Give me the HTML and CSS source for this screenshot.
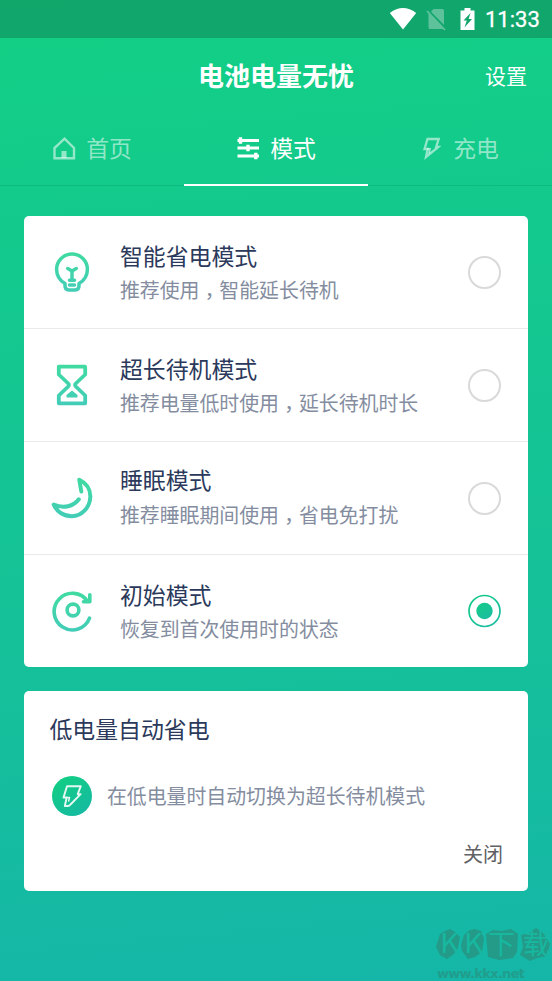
FILE: index.html
```html
<!DOCTYPE html>
<html lang="zh-CN">
<head>
<meta charset="utf-8">
<title>电池电量无忧</title>
<link rel="stylesheet" href="styles.css">
</head>
<body>
<div class="screen">
  <div class="status">
    <svg class="wifi" width="28" height="24" viewBox="0 0 28 24"><path d="M.8 6Q14-3.800 27.200 6L14 22.500Z" fill="#fff"/></svg>
    <svg class="sim" width="20" height="24" viewBox="0 0 20 24"><g fill="#fff" opacity=".32"><path d="M7.500 2H16.500Q18 2 18 3.500V18L5 4.700ZM2.500 6.500L17 22H4Q2.500 22 2.500 20.500Z"/></g><path d="M1 4L19 23" stroke="#fff" stroke-opacity=".32" stroke-width="1.800"/></svg>
    <svg class="battery" width="15" height="22" viewBox="0 0 15 22"><path d="M4.500 0H10.500V2.500H14.500V22H.5V2.500H4.500Z" fill="#fff"/><path d="M10.500 5L3.500 12.500H6.800L4.500 19.500L12 11H8.600Z" fill="#10a56b"/></svg>
    <span class="clock">11:33</span>
  </div>
  <header class="header"><h1>电池电量无忧</h1><span class="settings">设置</span></header>
  <nav class="tabs">
    <div class="tab">
      <svg width="24" height="24" viewBox="0 0 24 24" fill="none" stroke="currentColor" stroke-width="2.400"><path d="M2.500 22.200V12L12.500 2.700L22 12V22.200Z"/><path d="M9.500 15H14.500V22H9.500Z" fill="currentColor" stroke="none"/></svg>
      <span>首页</span>
    </div>
    <div class="tab active">
      <svg width="24" height="24" viewBox="0 0 24 24" fill="none" stroke="currentColor"><path d="M1.500 4.500H23M1.500 12H23M1.500 20H23" stroke-width="2.800"/><path d="M4.500 1.200V7.800M12 8.800V15.200M19.800 16.700V23.300" stroke-width="3.400"/></svg>
      <span>模式</span>
    </div>
    <div class="tab">
      <svg class="bolt" width="20" height="24" viewBox="0 0 20 24" fill="none" stroke="currentColor" stroke-width="2.300"><path d="M6.500 3H17.700L15.200 10.800H17.500L5 21L6.600 13H3.500Z"/><path d="M6 13H9L8 17.500" stroke-width="1.800"/></svg>
      <span>充电</span>
    </div>
  </nav>
  <main>
    <section class="card modes">
      <div class="row">
        <svg class="icon" width="42" height="42" viewBox="0 0 42 42" fill="none" stroke="url(#ic)" stroke-width="3.500" stroke-linecap="round" stroke-linejoin="round">
          <defs><linearGradient id="ic" gradientUnits="userSpaceOnUse" x1="0" y1="0" x2="0" y2="42"><stop stop-color="#40dba0"/><stop offset="1" stop-color="#43ccb8"/></linearGradient><linearGradient id="rg" x1="0" y1="0" x2=".7" y2="1"><stop stop-color="#14cc86"/><stop offset="1" stop-color="#1bbda0"/></linearGradient></defs>
          <path d="M14 32.500C8 29 5.600 24 5.600 18.500A15.400 15.400 0 0 1 36.400 18.500C36.400 24 34 29 28 32.500V34.500Q28 39 24 39H18Q14 39 14 34.500Z"/><path d="M16.700 17.500L21 20L25.300 17.500M21 20V29M18.500 29.200H23.500M18.500 34H23.500"/>
        </svg>
        <div class="copy"><h2>智能省电模式</h2><p>推荐使用<span class="comma" lang="zh-TW">，</span>智能延长待机</p></div>
        <span class="radio"></span>
      </div>
      <div class="row">
        <svg class="icon" width="42" height="42" viewBox="0 0 42 42" fill="none" stroke="url(#ic)" stroke-width="3.800" stroke-linejoin="round"><path d="M7.800 2.700H34Q34.200 2.700 34.200 4V10.500L24.800 19.500Q23.500 21 24.800 22.500L34.200 31.500V39.300H7.800V31.500L17.200 22.500Q18.500 21 17.200 19.500L7.800 10.500Z"/><path d="M21 26.500L26.500 31V33.500H15.500V31Z" fill="url(#ic)" stroke="none"/></svg>
        <div class="copy"><h2>超长待机模式</h2><p>推荐电量低时使用<span class="comma" lang="zh-TW">，</span>延长待机时长</p></div>
        <span class="radio"></span>
      </div>
      <div class="row">
        <svg class="icon" width="42" height="42" viewBox="0 0 42 42" fill="none" stroke="url(#ic)" stroke-width="4" stroke-linecap="round" stroke-linejoin="round"><path d="M30.300 14.500L28.300 2.800C36 6.500 39.500 13 39.300 20C38.700 31 30.500 39.200 21 39.200C12.500 39.200 5.500 34.500 2.700 27.500C12.500 32 22.500 29.500 27.800 22.300"/></svg>
        <div class="copy"><h2>睡眠模式</h2><p>推荐睡眠期间使用<span class="comma" lang="zh-TW">，</span>省电免打扰</p></div>
        <span class="radio"></span>
      </div>
      <div class="row">
        <svg class="icon" width="42" height="42" viewBox="0 0 42 42" fill="none" stroke="url(#ic)" stroke-width="3.600" stroke-linecap="round" stroke-linejoin="round"><path d="M38.500 28.200A18.300 18.300 0 1 1 36.500 11.200"/><path d="M38.800 4.700V11.700H32.500"/><circle cx="22" cy="20" r="5.900"/></svg>
        <div class="copy"><h2>初始模式</h2><p>恢复到首次使用时的状态</p></div>
        <svg class="radio-on" width="34" height="34" viewBox="0 0 34 34"><circle cx="17.500" cy="17" r="15.500" fill="none" stroke="url(#rg)" stroke-width="1.700"/><circle cx="17.500" cy="17" r="8.200" fill="url(#rg)"/></svg>
      </div>
    </section>
    <section class="card auto">
      <h2>低电量自动省电</h2>
      <div class="auto-row">
        <span class="badge"><svg width="20" height="24" viewBox="0 0 20 24" fill="none" stroke="#e4f9f2" stroke-width="1.900" stroke-linejoin="round" stroke-linecap="round"><path d="M5 2.200H18.800L15.700 10.200H18.600L8.500 20.500Q7.300 22 6 22H2.800L4.700 13.500H1.500Z"/><path d="M4.700 13.500H7.500L6.600 17" stroke-width="1.500"/></svg></span>
        <p>在低电量时自动切换为超长待机模式</p>
      </div>
      <span class="close">关闭</span>
    </section>
  </main>
  <div class="watermark">
    <svg width="118" height="62" viewBox="0 -8 118 62">
      <g fill="#239b88"><path d="M5 7L10 4L15 2L20 5L25 10L23 21L19 27L12 32L5 28L1 20Z"/><path d="M29 8L35 3L40 2L46 4L49 12L47 25L40 30L33 32L27 24L26 18Z"/><path d="M51 7L58 3L67 4L76 2L83 7L82 25L78 31L64 33L53 30Z"/><path d="M86 8L94 6L101 1L108 6L115 17L112 29L102 31L95 34L85 28L88 20Z"/></g>
      <g class="mark-text"><text x="5" y="26" textLength="19" lengthAdjust="spacingAndGlyphs">K</text><text x="29" y="26" textLength="19" lengthAdjust="spacingAndGlyphs">K</text><text x="53" y="27">下</text><text x="88" y="27">载</text></g>
      <text class="mark-url" x="2" y="51" textLength="88">www.kkx.net</text>
    </svg>
  </div>
</div>
</body>
</html>
```
FILE: styles.css
```css
* { box-sizing: border-box; }
body { margin: 0; font-family: "Noto Sans CJK SC", "Noto Sans", sans-serif; }
h1, h2, p { margin: 0; font-weight: 400; }
svg { display: block; flex: none; }
.screen { position: relative; width: 552px; height: 981px; overflow: hidden; background: linear-gradient(175deg, #12d084 0%, #13ca8c 22%, #15bf9b 70%, #15b6a8 100%); }
.status { display: flex; align-items: center; height: 38px; padding: 0 12px 0 389px; background: rgba(15, 125, 82, .5); }
.sim { margin-left: 9px; }
.battery { margin-left: 14px; }
.clock { margin-left: 10px; padding-top: 2px; font: 400 22px/36px Roboto, sans-serif; -webkit-text-stroke: .3px #fff; color: #fff; white-space: nowrap; }
.header { display: grid; grid-template-columns: 1fr auto 1fr; align-items: center; height: 74px; padding: 0 25px 1px; color: #fff; }
.header h1 { grid-column: 2; font-size: 26px; font-weight: 700; line-height: 36px; }
.settings { justify-self: end; font-size: 21px; line-height: 30px; }
.tabs { display: grid; grid-template-columns: repeat(3, 1fr); height: 74px; border-bottom: 1px solid rgba(8, 150, 100, .3); }
.tab { display: flex; align-items: center; justify-content: center; gap: 10px; height: 74px; color: rgba(255, 255, 255, .55); font-size: 22.800px; line-height: 32px; border-bottom: 2px solid transparent; }
.tab.active { color: #fff; border-bottom-color: #fff; }
.bolt { margin-right: 2px; }
main { display: flex; flex-direction: column; gap: 24px; padding: 30px 24.500px 0 24.400px; }
.card { background: #fff; border-radius: 5px; }
.modes { height: 451px; }
.row { display: flex; align-items: center; height: 113px; padding: 0 26.500px; border-bottom: 1px solid #e9e9ec; }
.row:last-child { height: 112px; border-bottom: 0; }
.copy { flex: 1; margin-left: 27px; }
h2 { color: #2b395b; font-size: 22.900px; line-height: 34px; }
p { color: #848da0; font-size: 19.900px; line-height: 34px; white-space: nowrap; }
.row:nth-child(3) .copy { margin-top: -2px; }
.row:nth-child(3) .copy p { margin-top: 1px; }
.copy p { padding-top: 1px; }
.comma { position: relative; top: 6px; font-family: "Noto Sans CJK TC", sans-serif; line-height: 20px; }
.radio { width: 33px; height: 33px; border: 2px solid #d9d9d9; border-radius: 50%; }
.auto { display: flex; flex-direction: column; height: 199.500px; padding: 20px 24.500px 0 25px; }
.auto-row { display: flex; align-items: center; gap: 15px; height: 40px; margin-top: 31px; padding-left: 2.500px; }
.badge { display: grid; place-items: center; flex: none; width: 40px; height: 40px; border-radius: 50%; background: linear-gradient(145deg, #12d080, #16b7a5); }
.close { align-self: flex-end; margin-top: 23px; color: #606164; font-size: 20px; line-height: 30px; }
.watermark { position: absolute; right: -1px; bottom: 0; }
.mark-text { fill: #17b7a0; font: 400 27px "Noto Sans CJK SC", sans-serif; }
.mark-url { fill: #219d8c; font: 700 13px "DejaVu Sans", sans-serif; }
```
